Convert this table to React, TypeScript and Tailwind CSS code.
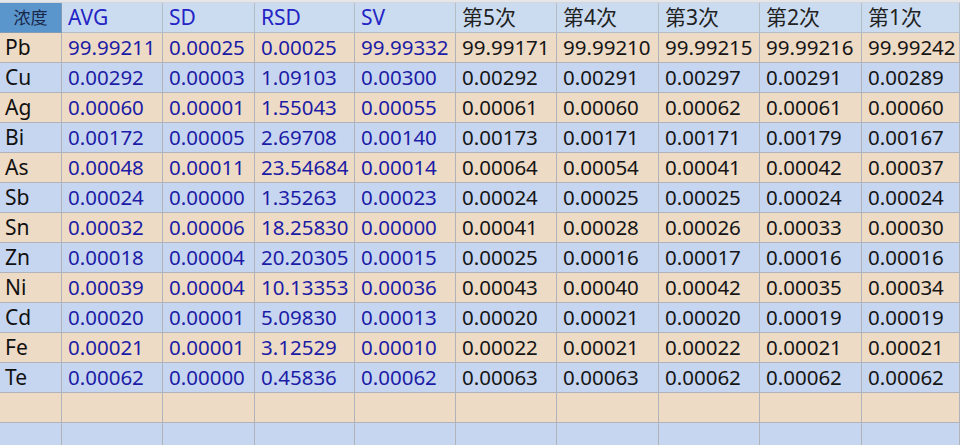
import React from "react";

const cols = ["AVG", "SD", "RSD", "SV", "第5次", "第4次", "第3次", "第2次", "第1次"];
const rows: [string, string[]][] = [
  ["Pb", ["99.99211", "0.00025", "0.00025", "99.99332", "99.99171", "99.99210", "99.99215", "99.99216", "99.99242"]],
  ["Cu", ["0.00292", "0.00003", "1.09103", "0.00300", "0.00292", "0.00291", "0.00297", "0.00291", "0.00289"]],
  ["Ag", ["0.00060", "0.00001", "1.55043", "0.00055", "0.00061", "0.00060", "0.00062", "0.00061", "0.00060"]],
  ["Bi", ["0.00172", "0.00005", "2.69708", "0.00140", "0.00173", "0.00171", "0.00171", "0.00179", "0.00167"]],
  ["As", ["0.00048", "0.00011", "23.54684", "0.00014", "0.00064", "0.00054", "0.00041", "0.00042", "0.00037"]],
  ["Sb", ["0.00024", "0.00000", "1.35263", "0.00023", "0.00024", "0.00025", "0.00025", "0.00024", "0.00024"]],
  ["Sn", ["0.00032", "0.00006", "18.25830", "0.00000", "0.00041", "0.00028", "0.00026", "0.00033", "0.00030"]],
  ["Zn", ["0.00018", "0.00004", "20.20305", "0.00015", "0.00025", "0.00016", "0.00017", "0.00016", "0.00016"]],
  ["Ni", ["0.00039", "0.00004", "10.13353", "0.00036", "0.00043", "0.00040", "0.00042", "0.00035", "0.00034"]],
  ["Cd", ["0.00020", "0.00001", "5.09830", "0.00013", "0.00020", "0.00021", "0.00020", "0.00019", "0.00019"]],
  ["Fe", ["0.00021", "0.00001", "3.12529", "0.00010", "0.00022", "0.00021", "0.00022", "0.00021", "0.00021"]],
  ["Te", ["0.00062", "0.00000", "0.45836", "0.00062", "0.00063", "0.00063", "0.00062", "0.00062", "0.00062"]],
  ["", ["", "", "", "", "", "", "", "", ""]],
  ["", ["", "", "", "", "", "", "", "", ""]],
];

const gridCls =
  "grid grid-cols-[62px_101px_92px_100px_101px_101px_102px_101px_102px_98px]";

export default function App() {
  return (
    <div
      className="w-[960px] h-[445px] overflow-hidden bg-[#e9ebef]"
      style={{ fontFamily: '"Noto Sans", "Noto Sans CJK SC", sans-serif' }}
    >
      <div className="h-[3px] bg-[#e4e6ea] border-b border-[#d2d5da]" />
      <div className={gridCls}>
        <div className="h-[30px] bg-[#5a95cc] border-r border-b border-[#7f9bb8] flex items-center justify-center text-[17px] text-[#18284a]">
          浓度
        </div>
        {cols.map((c, i) => (
          <div
            key={c}
            className={`h-[30px] bg-[#cbdcf1] border-r border-b border-[#b4bcc6] flex items-center pl-[6px] text-[21px] ${
              i < 4 ? "text-[#2424c4]" : "text-[#222]"
            }`}
          >
            {c}
          </div>
        ))}
      </div>
      {rows.map(([label, vals], r) => {
        const bg = r % 2 === 0 ? "bg-[#eedbc5]" : "bg-[#c7d6f0]";
        return (
          <div key={r} className={gridCls}>
            <div
              className={`h-[30px] ${bg} border-r border-b border-[#b0b4ba] flex items-center pl-[5px] text-[21px] text-[#111]`}
            >
              {label}
            </div>
            {vals.map((v, i) => (
              <div
                key={i}
                className={`h-[30px] ${bg} border-r border-b border-[#b0b4ba] flex items-center pl-[6px] text-[20.5px] ${
                  i < 4 ? "text-[#1c1ca6]" : "text-[#151515]"
                }`}
              >
                {v}
              </div>
            ))}
          </div>
        );
      })}
    </div>
  );
}
